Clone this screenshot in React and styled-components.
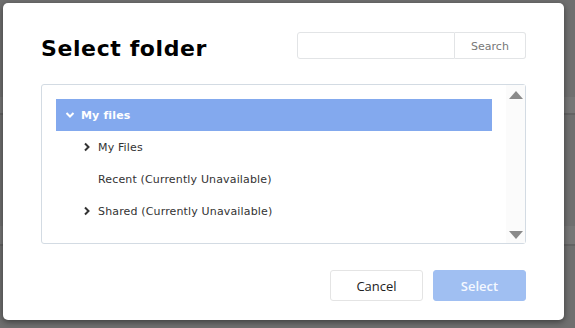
import React from "react";
import styled, { createGlobalStyle } from "styled-components";

const GlobalStyle = createGlobalStyle`
    html, body {
        margin: 0;
        padding: 0;
        background: #6f6f6f;
        overflow: hidden;
    }
`;

const Backdrop = styled.div`
    width: 575px;
    height: 328px;
    padding: 3px 0 0 3px;
    box-sizing: border-box;
    background: linear-gradient(
        to bottom,
        #6f6f6f 0, #6f6f6f 97px,
        #767676 97px, #767676 113px,
        #636363 113px, #636363 115px,
        #6f6f6f 115px, #6f6f6f 226px,
        #767676 226px, #767676 244px,
        #636363 244px, #636363 246px,
        #6f6f6f 246px
    );
`;

const Modal = styled.div`
    width: 561px;
    height: 317px;
    box-sizing: border-box;
    background: #fff;
    border-radius: 5px;
    box-shadow: 0 2px 6px rgba(0, 0, 0, 0.45);
    padding: 29px 38px 19px 38px;
    display: flex;
    flex-direction: column;
`;

const Header = styled.div`
    display: flex;
    justify-content: space-between;
    align-items: flex-start;
    height: 52px;
`;

const Title = styled.h1`
    margin: 3px 0 0 0;
    font-family: "DejaVu Sans", Verdana, sans-serif;
    font-weight: bold;
    font-size: 22px;
    line-height: 28px;
    color: #000;
    letter-spacing: 0.6px;
`;

const SearchBox = styled.div`
    display: flex;
`;

const SearchInput = styled.input`
    width: 158px;
    height: 27px;
    box-sizing: border-box;
    border: 1px solid #e2e4e6;
    border-radius: 3px 0 0 3px;
    outline: none;
    padding: 0 6px;
`;

const SearchButton = styled.button`
    width: 71px;
    height: 27px;
    box-sizing: border-box;
    border: 1px solid #e2e4e6;
    border-left: none;
    border-radius: 0 3px 3px 0;
    background: #fff;
    color: #777;
    font-family: "DejaVu Sans", Verdana, sans-serif;
    font-size: 11px;
    padding-top: 2px;
    cursor: pointer;
`;

const TreeBox = styled.div`
    height: 160px;
    box-sizing: border-box;
    border: 1px solid #d3dbe3;
    border-radius: 3px;
    display: flex;
`;

const TreeList = styled.ul`
    flex: 1;
    list-style: none;
    margin: 0;
    padding: 14px 14px 0 14px;
`;

const Row = styled.li`
    height: 32px;
    display: flex;
    align-items: center;
    padding-left: ${p => p.indent}px;
    background: ${p => (p.selected ? "#83a9ee" : "transparent")};
    color: ${p => (p.selected ? "#fff" : "#333")};
    font-family: "DejaVu Sans", Verdana, sans-serif;
    font-size: 11px;
    letter-spacing: 0.15px;
    font-weight: ${p => (p.selected ? "bold" : "normal")};
`;

const Caret = styled.span`
    width: 16px;
    display: inline-flex;
    align-items: center;
`;

const Scrollbar = styled.div`
    width: 19px;
    background: #fbfbfb;
    display: flex;
    flex-direction: column;
    justify-content: space-between;
    align-items: center;
    padding: 6px 0 4px;
`;

const Arrow = styled.div`
    width: 0;
    height: 0;
    border-left: 7px solid transparent;
    border-right: 7px solid transparent;
    ${p => p.down
        ? "border-top: 8px solid #8a8a8a;"
        : "border-bottom: 8px solid #8a8a8a;"}
`;

const Footer = styled.div`
    margin-top: auto;
    display: flex;
    justify-content: flex-end;
    gap: 10px;
`;

const Button = styled.button`
    width: 93px;
    height: 31px;
    box-sizing: border-box;
    border-radius: 3px;
    font-family: "Open Sans", sans-serif;
    font-size: 13px;
    border: 1px solid ${p => (p.primary ? "#a0bff2" : "#e4e4e4")};
    background: ${p => (p.primary ? "#a0bff2" : "#fff")};
    color: ${p => (p.primary ? "#f4f8ff" : "#222")};
    font-weight: ${p => (p.primary ? 600 : 400)};
    cursor: pointer;
`;

const Chevron = ({ down, color }) => (
    <svg width="10" height="10" viewBox="0 0 10 10">
        <path
            d={down ? "M1.5 3 L5 6.5 L8.5 3" : "M3 1.5 L6.5 5 L3 8.5"}
            fill="none"
            stroke={color}
            strokeWidth="2"
        />
    </svg>
);

const App = () => {
    const items = [
        { label: "My Files", caret: true },
        { label: "Recent (Currently Unavailable)", caret: false },
        { label: "Shared (Currently Unavailable)", caret: true },
    ];

    return (
        <>
            <GlobalStyle />
            <Backdrop>
                <Modal>
                    <Header>
                        <Title>Select folder</Title>
                        <SearchBox>
                            <SearchInput type="text" />
                            <SearchButton>Search</SearchButton>
                        </SearchBox>
                    </Header>
                    <TreeBox>
                        <TreeList>
                            <Row selected indent={9}>
                                <Caret><Chevron down color="#fff" /></Caret>
                                My files
                            </Row>
                            {items.map(item => (
                                <Row key={item.label} indent={26}>
                                    <Caret>{item.caret && <Chevron color="#333" />}</Caret>
                                    {item.label}
                                </Row>
                            ))}
                        </TreeList>
                        <Scrollbar>
                            <Arrow />
                            <Arrow down />
                        </Scrollbar>
                    </TreeBox>
                    <Footer>
                        <Button>Cancel</Button>
                        <Button primary>Select</Button>
                    </Footer>
                </Modal>
            </Backdrop>
        </>
    );
};

export default App;
